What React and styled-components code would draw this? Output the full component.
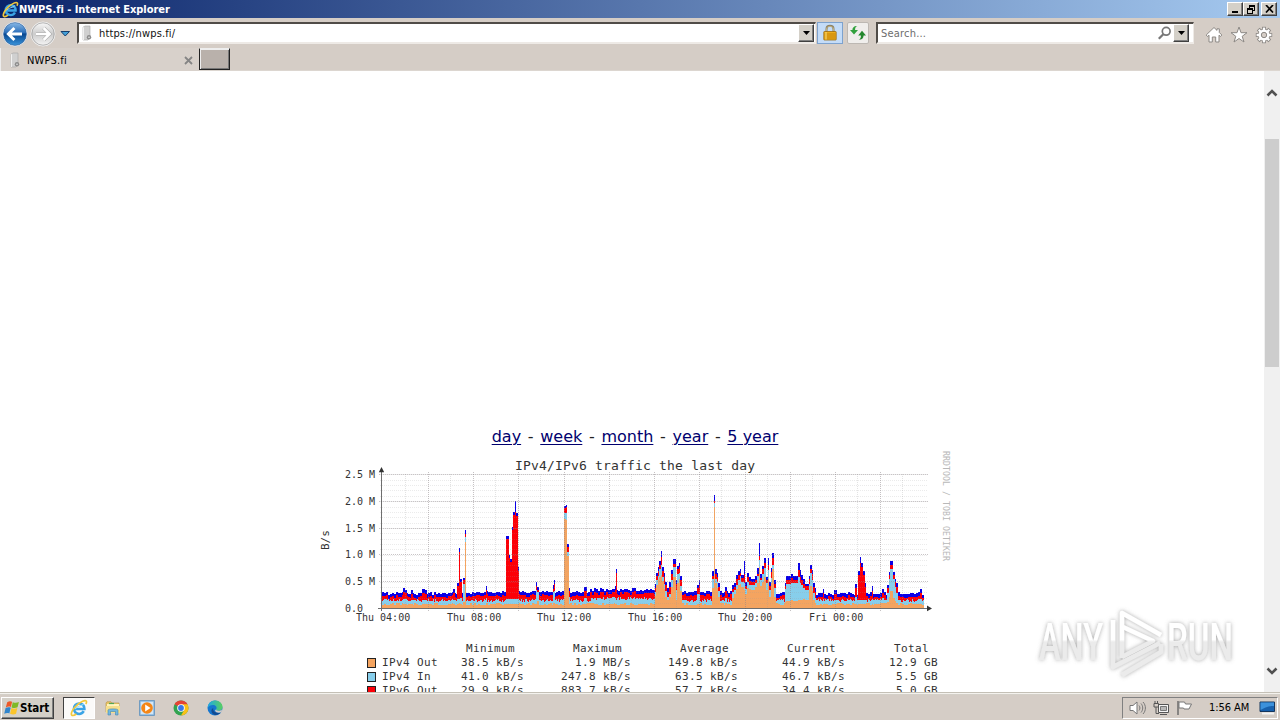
import React from "react";
import styled, { createGlobalStyle, css } from "styled-components";

const GlobalStyle = createGlobalStyle`
  * {
    box-sizing: border-box;
  }
  body {
    margin: 0;
    overflow: hidden;
    background: #fff;
    font-family: "DejaVu Sans Condensed", "DejaVu Sans", sans-serif;
    font-size: 11px;
    color: #000;
  }
  svg {
    display: block;
    flex: none;
  }
`;

const raised = css`
  border: 1px solid;
  border-color: #fff #404040 #404040 #fff;
  box-shadow: inset -1px -1px 0 #808080;
  background: #d4d0c8;
`;

const Desktop = styled.div`
  display: flex;
  flex-direction: column;
  width: 1280px;
  height: 720px;
  position: relative;
  overflow: hidden;
`;

const TitleBar = styled.div`
  display: flex;
  align-items: center;
  flex: none;
  height: 18px;
  padding: 0 3px 0 2px;
  background: linear-gradient(90deg, #0a246a, #a6caf0);
`;

const Title = styled.span`
  flex: 1;
  color: #fff;
  font-weight: bold;
  letter-spacing: -0.04px;
  white-space: nowrap;
`;

const WindowButton = styled.button`
  ${raised}
  width: 16px;
  height: 14px;
  padding: 0;
  margin-left: ${({ gap }) => gap || 0}px;
  display: flex;
  align-items: center;
  justify-content: center;
`;

const Toolbar = styled.div`
  display: flex;
  align-items: flex-start;
  flex: none;
  height: 30px;
  padding: 4px 7px 0 2px;
  background: #d5cdc6;
`;

const NavButtons = styled.div`
  display: flex;
  width: 75px;
  margin-top: -1px;
`;

const Field = styled.div`
  display: flex;
  align-items: center;
  width: ${({ width }) => width}px;
  height: 22px;
  padding: ${({ pad }) => pad};
  margin-left: ${({ gap }) => gap || 0}px;
  background: #fff;
  border: 2px solid;
  border-color: #504c48 #eeeae6 #eeeae6 #504c48;
  border-right-width: 1px;
`;

const FieldText = styled.span`
  flex: 1;
  padding: 1px 0 0 ${({ indent }) => indent || 0}px;
  color: ${({ muted }) => (muted ? "#6d6d6d" : "#111")};
  letter-spacing: ${({ spacing }) => spacing || 0}px;
`;

const DropButton = styled.button`
  ${raised}
  width: 16px;
  height: 18px;
  padding: 0;
  display: flex;
  align-items: center;
  justify-content: center;
`;

const ToolButton = styled.button`
  display: flex;
  align-items: center;
  justify-content: center;
  width: ${({ width }) => width}px;
  height: 22px;
  padding: 0;
  margin-left: ${({ gap }) => gap}px;
  border: 1px solid ${({ active }) => (active ? "#7da2ce" : "#bdb8b3")};
  border-radius: ${({ active }) => (active ? 0 : 2)}px;
  background: ${({ active }) => (active ? "#c4dcf8" : "#f0eeec")};
`;

const ToolIcons = styled.div`
  display: flex;
  gap: 7px;
  margin: 4px 0 0 auto;
`;

const TabRow = styled.div`
  display: flex;
  flex: none;
  height: 23px;
  background: #d5cdc6;
  border-bottom: 1px solid #dcd6d0;
`;

const Tab = styled.div`
  display: flex;
  align-items: center;
  width: 199px;
  height: 23px;
  padding: 1px 6px 0 8px;
  background: #d8d1cb;
  border-left: 1px solid #eee;
`;

const TabLabel = styled.span`
  flex: 1;
  padding-left: 6px;
  letter-spacing: 0.15px;
`;

const NewTab = styled.div`
  width: 31px;
  height: 22px;
  background: #b9b1ab;
  border: 1px solid #222;
  border-top-color: #eee;
  box-shadow: inset 1px 1px 0 #eee, inset -1px -1px 0 #777;
`;

const Viewport = styled.div`
  display: flex;
  flex: none;
  height: 621px;
  overflow: hidden;
`;

const Page = styled.main`
  flex: 1;
  padding: 356px 0 0 316px;
  background: #fff;
  overflow: hidden;
`;

const Periods = styled.nav`
  width: 638px;
  height: 21px;
  font: 16px/20px "DejaVu Sans", sans-serif;
  text-align: center;
  white-space: pre;
  color: #222;
`;

const Period = styled.a`
  color: #00006e;
  text-decoration: underline;
  text-underline-offset: 2px;
  text-decoration-thickness: 1px;
`;

const Dash = styled.span`
  padding: 0 1.6px;
`;

const ChartText = styled.text`
  font-family: "DejaVu Sans Mono", monospace;
  font-size: ${({ $size }) => $size}px;
  fill: ${({ $color }) => $color || "#333"};
  white-space: pre;
`;

const Legend = styled.div`
  padding: 4px 0 0 51px;
  font: 11px/14px "DejaVu Sans Mono", monospace;
  letter-spacing: 0.38px;
  color: #333;
`;

const LegendRow = styled.div`
  display: grid;
  grid-template-columns: 15px 63px 79px 107px 107px 107px 93px;
  align-items: center;
  height: 14px;
  white-space: nowrap;
`;

const Swatch = styled.span`
  width: 9px;
  height: 10px;
  margin-top: -1px;
  border: 1px solid #222;
  background: ${({ color }) => color};
`;

const Amount = styled.span`
  text-align: right;
  padding-right: ${({ inset }) => inset || 0}px;
`;

const ScrollBar = styled.div`
  display: flex;
  flex-direction: column;
  align-items: center;
  width: 16px;
  padding: 18px 0 17px;
  background: #f0f0f0;
`;

const Thumb = styled.div`
  width: 14px;
  height: 228px;
  margin: 42px 0 auto;
  background: #cdcdcd;
`;

const Taskbar = styled.footer`
  display: flex;
  align-items: center;
  flex: none;
  height: 28px;
  padding: 2px 2px 0 1px;
  background: #d5cdc6;
  border-top: 1px solid #c4c0b6;
  box-shadow: inset 0 1px 0 #f4f2ee, inset 0 2px 0 #d4d0c8;
`;

const StartButton = styled.button`
  ${raised}
  display: flex;
  align-items: center;
  width: 53px;
  height: 22px;
  margin-right: 9px;
  padding: 0 0 0 2px;
  font: bold 11.5px "DejaVu Sans Condensed", "DejaVu Sans", sans-serif;
  letter-spacing: -0.05px;
  color: #000;
`;

const TaskItem = styled.div`
  display: flex;
  align-items: center;
  justify-content: center;
  width: 32px;
  height: 22px;
  margin-right: 2px;
  ${({ active }) =>
    active &&
    `
    background: #fbfaf9;
    border: 1px solid;
    border-color: #404040 #fff #fff #404040;
  `}
`;

const Tray = styled.div`
  display: flex;
  align-items: center;
  width: 156px;
  height: 22px;
  margin-left: auto;
  padding: 0 0 0 6px;
  border: 1px solid;
  border-color: #808080 #fff #fff #808080;
`;

const Clock = styled.span`
  width: 50px;
  margin-left: 16px;
  letter-spacing: -0.05px;
  white-space: nowrap;
`;

const TrayGap = styled.span`
  width: 6px;
`;

const Watermark = styled.div`
  position: absolute;
  left: 1030px;
  top: 602px;
`;

const IeIcon = ({ size = 16 }) => (
  <svg width={size} height={size} viewBox="0 0 16 16" fill="none">
    <path d="M12.2 10.8C11.2 12.6 9.8 13.3 8.2 13.3C5.4 13.3 3.5 11.3 3.5 8.7C3.5 6 5.5 4 8.2 4C11 4 12.9 5.9 12.8 8.9H4.2" stroke="#3ba4e6" strokeWidth="2.3" />
    <path d="M12 4.2C12.4 6 7 5.5 4.4 8.8" stroke="#9be0fb" strokeWidth=".9" />
    <path d="M14 4.5C15.4 2.2 14.6.5 11.2 2C6.5 4 1.4 10 1.2 13.2C1.1 15.5 3.5 14.8 5.7 13.3" stroke="#f2c83c" strokeWidth="1.5" />
  </svg>
);

const Favicon = () => (
  <svg width="12" height="16" viewBox="0 0 12 16">
    <path d="M2 2.2L4 1H9V13L7 15H2Z" fill="#d0d0d0" stroke="#a5a5a5" strokeWidth=".6" />
    <path d="M2.4 2.2V15" stroke="#f7f7f7" fill="none" />
    <circle cx="8" cy="12.3" r="2.2" fill="#8b8b8b" />
    <circle cx="8" cy="12.3" r=".8" fill="#e7e7e7" />
  </svg>
);

const NavIcons = () => (
  <svg width="75" height="26" viewBox="0 0 75 26">
    <defs>
      <linearGradient id="back" x2="0" y2="1">
        <stop stopColor="#8dbdea" />
        <stop offset=".45" stopColor="#2b6eb9" />
        <stop offset=".5" stopColor="#07468f" />
        <stop offset="1" stopColor="#3c99e0" />
      </linearGradient>
      <linearGradient id="forward" x2="0" y2="1">
        <stop stopColor="#fafafa" />
        <stop offset=".5" stopColor="#ccc" />
        <stop offset="1" stopColor="#f7f7f7" />
      </linearGradient>
    </defs>
    <circle cx="13" cy="13" r="12" fill="url(#back)" stroke="#e9edf3" />
    <circle cx="13" cy="13" r="11.4" fill="none" stroke="#315f98" strokeWidth=".6" />
    <path d="M20 13H7M12.4 7L6.4 13L12.4 19" fill="none" stroke="#fff" strokeWidth="3" />
    <circle cx="41" cy="13" r="12" fill="url(#forward)" stroke="#eee" />
    <circle cx="41" cy="13" r="11.2" fill="none" stroke="#999" strokeWidth=".7" />
    <path d="M34 13H47M41.6 7L47.6 13L41.6 19" fill="none" stroke="#a9a9a9" strokeWidth="3.8" />
    <path d="M34 13H47M41.6 7L47.6 13L41.6 19" fill="none" stroke="#fff" strokeWidth="2.6" />
    <path d="M59 10.5H67.5L63.25 15Z" fill="#43a0d8" stroke="#173f6d" />
  </svg>
);

const Caret = () => (
  <svg width="7" height="4" viewBox="0 0 7 4">
    <path d="M0 0H7L3.5 4Z" />
  </svg>
);

const LockIcon = () => (
  <svg width="14" height="18" viewBox="0 0 14 18">
    <path d="M3.5 8V5C3.5.8 10.5.8 10.5 5V8" fill="none" stroke="#8b8066" strokeWidth="2" />
    <path d="M3.5 7V5C3.5 1.4 10.5 1.4 10.5 5V7" fill="none" stroke="#d7c58d" strokeWidth=".7" />
    <rect x=".8" y="7.5" width="12.4" height="8.5" rx=".6" fill="#edae1c" stroke="#9a6a12" strokeWidth=".8" />
    <path d="M1.5 10H12.5M1.5 12H12.5M1.5 14H12.5" stroke="#c48109" />
    <path d="M3 8V15.5" stroke="#ffe27a" />
  </svg>
);

const RefreshIcon = () => (
  <svg width="16" height="14" viewBox="0 0 16 14">
    <path d="M7.4 0C5.3.6 5 2.6 5.1 4H8L4 8.6L0 4H2.4C2.4 1.2 4.6-.2 7.4 0Z" fill="#31a13d" />
    <path d="M8.6 13.6C10.7 13 11 11 10.9 9.4H8.2L12 4.8L16 9.4H13.6C13.6 12.4 11.4 13.8 8.6 13.6Z" fill="#23872e" />
  </svg>
);

const SearchIcon = () => (
  <svg width="15" height="14" viewBox="0 0 15 14">
    <circle cx="8.2" cy="5.3" r="3.9" fill="#fff" stroke="#777" strokeWidth="1.7" />
    <path d="M5.3 8.3L.8 12.8" stroke="#777" strokeWidth="2.2" />
  </svg>
);

const HomeIcon = () => (
  <svg width="18" height="18" viewBox="0 0 18 18" fill="#fff" stroke="#8d8985">
    <path d="M9 1.5L1.2 9L2.5 10.5L4 9.2V16H7.3V11H10.7V16H14V9.2L15.5 10.5L16.8 9L14.3 6.5V2.8H12V4.4Z" />
  </svg>
);

const StarIcon = () => (
  <svg width="18" height="18" viewBox="0 0 18 18" fill="#fff" stroke="#8d8985">
    <path d="M9 1L11 6.7H17L12.2 10.3L14 16L9 12.5L4 16L5.8 10.3L1 6.7H7Z" />
  </svg>
);

const GearIcon = () => (
  <svg width="18" height="18" viewBox="0 0 18 18" fill="none">
    {[0, 45, 90, 135].map((angle) => (
      <path key={angle} d="M9 .8V17.2" stroke="#8d8985" strokeWidth="4" transform={`rotate(${angle} 9 9)`} />
    ))}
    <circle cx="9" cy="9" r="6.2" fill="#8d8985" />
    {[0, 45, 90, 135].map((angle) => (
      <path key={angle} d="M9 1.6V16.4" stroke="#fff" strokeWidth="2.3" transform={`rotate(${angle} 9 9)`} />
    ))}
    <circle cx="9" cy="9" r="5.5" fill="#fff" />
    <circle cx="9" cy="9" r="2.7" fill="#d5cdc6" stroke="#8d8985" />
  </svg>
);

const Chevron = ({ down }) => (
  <svg width="12" height="8" viewBox="0 0 12 8" fill="none">
    <path d={down ? "M1.5 1.5L6 6L10.5 1.5" : "M1.5 6.5L6 2L10.5 6.5"} stroke="#505050" strokeWidth="2.6" />
  </svg>
);

const WindowsFlag = () => (
  <svg width="16" height="16" viewBox="0 0 15 15">
    <path d="M3 2C5 .7 6.4 1 7.6 1.6L6.5 6.6C5 6 3.5 6 1.7 7Z" fill="#ed5928" />
    <path d="M8.2 2C10.4 2.8 12 2.7 14 1.8L12.7 6.8C11 7.7 9 7.8 7.1 7Z" fill="#7fb927" />
    <path d="M1.5 7.6C3.2 6.6 5 6.6 6.3 7.2L5 12.6C3.6 12 2 12 .2 13Z" fill="#3185cc" />
    <path d="M7 7.6C8.8 8.4 10.7 8.4 12.5 7.5L11.3 12.9C9.4 13.8 7.8 13.7 5.7 13Z" fill="#fbc52b" />
  </svg>
);

const FolderIcon = () => (
  <svg width="16" height="16" viewBox="0 0 16 16">
    <path d="M1 3L2 1.8H6L7 3H14V12H1Z" fill="#e8c568" stroke="#b79140" strokeWidth=".6" />
    <path d="M2 4H14V7H2Z" fill="#fff4bc" />
    <path d="M4 3.5H9" stroke="#51a655" strokeWidth="1.2" />
    <path d="M1 6H15V13H1Z" fill="#f6df8c" />
    <path d="M3 15V10C3 8.5 13 8.5 13 10V15H10.5V11.5H5.5V15Z" fill="#72b8df" stroke="#4386af" strokeWidth=".6" />
  </svg>
);

const PlayerIcon = () => (
  <svg width="16" height="16" viewBox="0 0 16 16">
    <rect x=".7" y=".7" width="14.6" height="14.6" fill="#aad0ef" stroke="#5c8fbd" />
    <rect x="2" y="2" width="12" height="12" fill="#d3e6f6" />
    <circle cx="8" cy="8" r="5.8" fill="#f48616" />
    <path d="M6.2 4.5L11.5 8L6.2 11.5Z" fill="#fff" />
  </svg>
);

const ChromeIcon = () => (
  <svg width="16" height="16" viewBox="0 0 16 16">
    <circle cx="8" cy="8" r="7.5" fill="#32a350" />
    <path d="M8 8L1.5 4.2A7.5 7.5 0 0 1 14.5 4.2Z" fill="#e54335" />
    <path d="M8 4.3H14.5A7.5 7.5 0 0 1 8 15.5L11.2 10Z" fill="#fbc116" />
    <circle cx="8" cy="8" r="3.8" fill="#fff" />
    <circle cx="8" cy="8" r="2.9" fill="#3978e7" />
  </svg>
);

const EdgeIcon = () => (
  <svg width="16" height="16" viewBox="0 0 16 16">
    <defs>
      <linearGradient id="edge">
        <stop stopColor="#20a8e5" />
        <stop offset="1" stopColor="#58cf60" />
      </linearGradient>
    </defs>
    <circle cx="8" cy="8" r="7.5" fill="#1676cf" />
    <path d="M.6 8C1 3.4 4 .5 8 .5C12.6.5 15.5 3.6 15.5 7C15.5 9.4 13.7 10.7 11.5 10.7C9.3 10.7 8.6 9.7 9.4 8.7C10.2 7.2 8.6 5 6 5C3.5 5 1.5 6 .6 8Z" fill="url(#edge)" />
    <path d="M6.2 8C5.6 11.5 9 13.5 13.8 12.6C10.5 16.4 4.4 15.5 4.4 10.8C4.4 9.5 5.2 8.6 6.2 8Z" fill="#134b91" />
    <path d="M9.4 8.7C8.6 9.7 9.3 10.7 11.5 10.7C12.9 10.7 14.1 10.2 14.8 9.4V12C12 13.4 8.8 12.6 8 10.8Z" fill="#d5cdc6" />
  </svg>
);

const SpeakerIcon = () => (
  <svg width="18" height="16" viewBox="0 0 18 16" fill="none" stroke="#777">
    <path d="M1 5.5H4L8 2V14L4 10.5H1Z" fill="#fff" />
    <path d="M10 5.5C11.2 7 11.2 9 10 10.5M12 3.5C14.3 6.3 14.3 9.7 12 12.5M14 2C17.2 5.4 17.2 10.6 14 14" />
  </svg>
);

const NetworkIcon = () => (
  <svg width="17" height="16" viewBox="0 0 17 16" fill="none" stroke="#555">
    <path d="M5.5 4.5H15.5V12.5H5.5Z" fill="#f4f4f4" />
    <path d="M7.5 6.5H13.5V10.5H7.5Z" fill="#b8b8b8" stroke="#777" />
    <path d="M7 14.5H14M1 3.5H5.5V7H1ZM2 1V3M4.5 1V3M3 7V13.5H6" />
  </svg>
);

const FlagIcon = () => (
  <svg width="17" height="16" viewBox="0 0 17 16">
    <path d="M2 1V15" stroke="#666" strokeWidth="1.4" />
    <path d="M3 2H8.5L9.5 4H15.5L13 9H8L7.5 8H3Z" fill="#fff" stroke="#777" />
  </svg>
);

const DesktopIcon = () => (
  <svg width="16" height="16" viewBox="0 0 16 16">
    <path d="M1 2H15.5V11.5H1Z" fill="#1760ad" stroke="#16365d" />
    <path d="M1.5 2.5H15V6C9 5.5 5 8 1.5 10Z" fill="#3c91dc" />
    <path d="M3 13.5H15" stroke="#f4f4f4" strokeWidth="2" />
  </svg>
);

// Each burst: first x, last x, then the top of IPv6 In, IPv6 Out, IPv4 In and IPv4 Out
const bursts = [
  [403, 404, 588, 592, 599, 604], [405, 406, 590, 593, 599, 604], [411, 412, 590, 594, 600, 604],
  [422, 424, 589, 593, 600, 604], [425, 426, 590, 594, 600, 604], [453, 454, 589, 593, 600, 604],
  [457, 458, 583, 586, 599, 604], [459, 459, 548, 552, 599, 603], [460, 461, 579, 582, 598, 604],
  [463, 464, 578, 580, 584, 602], [465, 465, 530, 534, 537, 542], [486, 486, 586, 590, 598, 603],
  [506, 508, 536, 539, 599, 604], [509, 509, 555, 558, 599, 604], [510, 511, 559, 562, 599, 604],
  [512, 512, 527, 530, 599, 604], [513, 514, 512, 515, 599, 604], [515, 515, 501, 512, 599, 604],
  [516, 517, 513, 516, 599, 604], [518, 518, 567, 571, 599, 604], [536, 536, 582, 586, 590, 604],
  [537, 538, 587, 590, 592, 601], [553, 553, 585, 589, 592, 603], [554, 554, 580, 584, 591, 603],
  [564, 565, 506, 508, 513, 519], [566, 566, 505, 507, 513, 520], [567, 568, 544, 547, 552, 556],
  [569, 569, 588, 591, 597, 604], [584, 586, 587, 591, 598, 604], [615, 615, 586, 590, 598, 604],
  [616, 616, 569, 573, 600, 604], [655, 655, 584, 588, 592, 596], [656, 657, 573, 576, 580, 585],
  [658, 658, 567, 571, 576, 580], [659, 660, 561, 565, 569, 577], [661, 661, 551, 557, 565, 575],
  [662, 663, 567, 571, 577, 581], [664, 664, 573, 577, 584, 589], [665, 666, 582, 585, 591, 597],
  [667, 668, 588, 592, 597, 600], [669, 670, 582, 587, 594, 597], [671, 672, 570, 574, 580, 587],
  [673, 675, 559, 564, 567, 577], [676, 676, 580, 584, 590, 600], [677, 678, 566, 569, 574, 583],
  [679, 679, 563, 567, 573, 579], [680, 681, 576, 580, 586, 591], [697, 698, 585, 588, 594, 604],
  [699, 699, 580, 585, 594, 604], [712, 713, 571, 576, 579, 588], [714, 714, 495, 501, 503, 507],
  [715, 716, 569, 574, 579, 583], [717, 717, 573, 577, 582, 588], [718, 719, 583, 587, 591, 597],
  [725, 726, 587, 591, 598, 603], [732, 733, 585, 589, 592, 598], [734, 735, 583, 587, 590, 594],
  [736, 737, 575, 579, 585, 589], [738, 739, 571, 575, 580, 585], [740, 740, 569, 573, 576, 584],
  [741, 743, 575, 578, 582, 587], [744, 744, 561, 574, 583, 590], [745, 746, 582, 586, 589, 594],
  [747, 748, 573, 577, 582, 588], [749, 750, 577, 581, 585, 589], [751, 754, 579, 582, 585, 590],
  [755, 756, 576, 580, 583, 587], [757, 758, 568, 574, 576, 583], [759, 759, 543, 556, 560, 567],
  [760, 761, 574, 578, 580, 586], [762, 763, 566, 569, 574, 582], [764, 765, 558, 563, 568, 577],
  [766, 767, 577, 580, 583, 590], [768, 768, 558, 565, 570, 579], [769, 770, 582, 586, 590, 597],
  [771, 771, 568, 572, 578, 583], [772, 773, 553, 558, 565, 569], [774, 775, 580, 584, 588, 597],
  [785, 785, 583, 586, 589, 602], [786, 790, 576, 580, 584, 601], [791, 792, 574, 578, 583, 600],
  [793, 797, 576, 580, 583, 601], [798, 799, 563, 570, 577, 600], [800, 800, 570, 577, 583, 600],
  [801, 802, 575, 580, 585, 600], [803, 804, 579, 584, 588, 599], [805, 808, 584, 586, 590, 600],
  [809, 809, 576, 579, 584, 590], [810, 811, 565, 569, 573, 586], [812, 812, 570, 574, 580, 591],
  [813, 814, 583, 587, 593, 600], [815, 815, 588, 592, 598, 603], [823, 823, 589, 593, 599, 604],
  [834, 836, 590, 594, 600, 604], [855, 856, 584, 588, 597, 604], [858, 859, 571, 575, 600, 604],
  [860, 860, 557, 563, 600, 604], [861, 862, 563, 567, 600, 604], [863, 864, 571, 575, 600, 604],
  [865, 865, 583, 587, 600, 604], [872, 872, 586, 591, 599, 604], [882, 883, 589, 593, 598, 603],
  [887, 888, 585, 588, 593, 602], [889, 889, 572, 575, 579, 597], [890, 892, 561, 565, 569, 591],
  [893, 894, 572, 575, 579, 598], [895, 895, 579, 582, 587, 601], [896, 897, 583, 587, 593, 603],
  [920, 921, 589, 593, 599, 604],
];

const noise = (n) => {
  const s = Math.sin(n * 12.9898) * 43758.5453;
  return s - Math.floor(s);
};

const idleAt = (x) => {
  let level = 593.2;
  if (x > 475 && x < 590) level = 592;
  if (x >= 590 && x < 655) level = 589.5;
  if (x >= 682 && x < 732) level = 591.8;
  if (x >= 815) level = 593.5;
  const step = Math.floor(x / 2);
  const top = Math.round(level + noise(step) * 3 - 1.5);
  const blue = 3 + Math.round(noise(step + 41));
  const cyan = (x > 590 && x < 655 ? 598.3 : 600.3) + noise(x + 7) * 3 - 1.5;
  return [top, top + blue, Math.round(cyan), Math.round(604 + noise(step + 99) * 3 - 1.5)];
};

const columns = [];
for (let x = 382; x < 924; x++) {
  const burst = bursts.find(([from, to]) => x >= from && x <= to);
  columns.push([x, ...(burst ? burst.slice(2) : idleAt(x))]);
}

const series = [
  { color: "#0a00e6", at: 1 },
  { color: "#fc0008", at: 2 },
  { color: "#87ceeb", at: 3 },
  { color: "#f4a460", at: 4 },
];

const areaPath = (at) => columns.map((c) => `M${c[0]} 608V${c[at]}h1V608z`).join("");

const yTicks = ["0.0  ", "0.5 M", "1.0 M", "1.5 M", "2.0 M", "2.5 M"];
const xTicks = ["Thu 04:00", "Thu 08:00", "Thu 12:00", "Thu 16:00", "Thu 20:00", "Fri 00:00"];
const yAt = [608.5, 581.5, 554.5, 528.5, 501.5, 474.5];
const range = (n) => Array.from({ length: n }, (_, i) => i);

const TrafficChart = () => (
  <svg width="638" height="190" viewBox="316 448 638 190">
    <g shapeRendering="crispEdges">
      {series.map(({ color, at }) => (
        <path key={color} d={areaPath(at)} fill={color} />
      ))}
      <g strokeDasharray="1 1" fill="none">
        {range(25).map((i) => (
          <path key={i} d={`M380 ${Math.round(603 - i * 5.36) + 0.5}H927`} stroke="#999" strokeOpacity=".2" />
        ))}
        {range(12).map((i) => (
          <path key={i} d={`M${Math.floor(405 + i * 45.25) + 0.5} 474V609`} stroke="#999" strokeOpacity=".28" />
        ))}
        {yAt.slice(1).map((y) => (
          <path key={y} d={`M379 ${y}H928`} stroke="#8c8488" strokeOpacity=".48" />
        ))}
        {range(11).map((i) => (
          <path key={i} d={`M${Math.floor(428.3 + i * 45.25) + 0.5} 472V611`} stroke="#8c8488" strokeOpacity=".5" />
        ))}
      </g>
      <path d="M381.5 611V471M378 608.5H929" stroke="#555" strokeOpacity=".85" fill="none" />
    </g>
    <path d="M378.8 472.2H384.2L381.5 467ZM927 605.5V611.2L932 608.4Z" fill="#333" />
    <ChartText $size={13} x="515" y="470" textLength="240">IPv4/IPv6 traffic the last day</ChartText>
    {yTicks.map((label, i) => (
      <ChartText key={label} $size={10} x="345" y={yAt[i] + 3.5}>{label}</ChartText>
    ))}
    {xTicks.map((label, i) => (
      <ChartText key={label} $size={10} x={Math.round(356 + i * 90.6)} y="621">{label}</ChartText>
    ))}
    <ChartText $size={11} transform="translate(329 550) rotate(-90)">B/s</ChartText>
    <ChartText $size={8.2} $color="#b8b8b8" transform="translate(943 451) rotate(90)" textLength="110">
      RRDTOOL / TOBI OETIKER
    </ChartText>
  </svg>
);

const traffic = [
  { name: "IPv4 Out", color: "#f4a460", values: ["38.5 kB/s", "1.9 MB/s", "149.8 kB/s", "44.9 kB/s", "12.9 GB"] },
  { name: "IPv4 In", color: "#87ceeb", values: ["41.0 kB/s", "247.8 kB/s", "63.5 kB/s", "46.7 kB/s", "5.5 GB"] },
  { name: "IPv6 Out", color: "#fc0008", values: ["29.9 kB/s", "883.7 kB/s", "57.7 kB/s", "34.4 kB/s", "5.0 GB"] },
];

const periods = ["day", "week", "month", "year", "5 year"];

const App = () => (
  <Desktop>
    <GlobalStyle />
    <TitleBar>
      <IeIcon size={17} />
      <Title>NWPS.fi - Internet Explorer</Title>
      <WindowButton>
        <svg width="10" height="9"><path d="M2 7H8" stroke="#000" strokeWidth="2" /></svg>
      </WindowButton>
      <WindowButton>
        <svg width="10" height="9" fill="none" stroke="#000" shapeRendering="crispEdges">
          <path d="M3.5 4V.5H8.5V5.5H7M3 1.5H9M1.5 3.5H6.5V8.5H1.5ZM1 4.5H7" />
        </svg>
      </WindowButton>
      <WindowButton gap={2}>
        <svg width="9" height="8"><path d="M1 0L8 7.5M8 0L1 7.5" stroke="#000" strokeWidth="1.7" /></svg>
      </WindowButton>
    </TitleBar>

    <Toolbar>
      <NavButtons><NavIcons /></NavButtons>
      <Field width={739} pad="0 1px 0 2px">
        <Favicon />
        <FieldText indent={6} spacing={0.14}>https://nwps.fi/</FieldText>
        <DropButton><Caret /></DropButton>
      </Field>
      <ToolButton active width={26} gap={1}><LockIcon /></ToolButton>
      <ToolButton width={22} gap={4}><RefreshIcon /></ToolButton>
      <Field width={318} gap={7} pad="0 4px 0 3px">
        <FieldText muted spacing={0.2}>Search...</FieldText>
        <SearchIcon />
        <DropButton><Caret /></DropButton>
      </Field>
      <ToolIcons>
        <HomeIcon />
        <StarIcon />
        <GearIcon />
      </ToolIcons>
    </Toolbar>

    <TabRow>
      <Tab>
        <Favicon />
        <TabLabel>NWPS.fi</TabLabel>
        <svg width="9" height="9"><path d="M1 1L8 8M8 1L1 8" stroke="#858585" strokeWidth="1.8" /></svg>
      </Tab>
      <NewTab />
    </TabRow>

    <Viewport>
      <Page>
        <Periods>
          {periods.map((period, i) => (
            <React.Fragment key={period}>
              {i > 0 && <Dash> - </Dash>}
              <Period>{period}</Period>
            </React.Fragment>
          ))}
        </Periods>
        <TrafficChart />
        <Legend>
          <LegendRow>
            <span />
            <span />
            <Amount inset={9}>Minimum</Amount>
            <Amount inset={9}>Maximum</Amount>
            <Amount inset={9}>Average</Amount>
            <Amount inset={9}>Current</Amount>
            <Amount inset={9}>Total</Amount>
          </LegendRow>
          {traffic.map(({ name, color, values }) => (
            <LegendRow key={name}>
              <Swatch color={color} />
              <span>{name}</span>
              {values.map((value, i) => (
                <Amount key={i}>{value}</Amount>
              ))}
            </LegendRow>
          ))}
        </Legend>
      </Page>
      <ScrollBar>
        <Chevron />
        <Thumb />
        <Chevron down />
      </ScrollBar>
    </Viewport>

    <Taskbar>
      <StartButton>
        <WindowsFlag />
        Start
      </StartButton>
      <TaskItem active><IeIcon size={18} /></TaskItem>
      <TaskItem><FolderIcon /></TaskItem>
      <TaskItem><PlayerIcon /></TaskItem>
      <TaskItem><ChromeIcon /></TaskItem>
      <TaskItem><EdgeIcon /></TaskItem>
      <Tray>
        <SpeakerIcon />
        <TrayGap />
        <NetworkIcon />
        <TrayGap />
        <FlagIcon />
        <Clock>1:56 AM</Clock>
        <DesktopIcon />
      </Tray>
    </Taskbar>

    <Watermark>
      <svg width="212" height="82" viewBox="0 0 212 82">
        <defs>
          <linearGradient id="fade" gradientUnits="userSpaceOnUse" x1="0" y1="10" x2="0" y2="70">
            <stop offset=".46" stopColor="#fff" />
            <stop offset=".5" stopColor="#ebebeb" />
          </linearGradient>
          <filter id="glow" x="-10%" y="-20%" width="120%" height="140%">
            <feDropShadow dx="0" dy="0" stdDeviation="2" floodColor="#777" floodOpacity=".65" />
          </filter>
        </defs>
        <g filter="url(#glow)" fontFamily="Roboto, sans-serif" fontWeight="500" fontSize="52" fill="url(#fade)">
          <text x="9" y="58" textLength="64" lengthAdjust="spacingAndGlyphs">ANY</text>
          <text x="137" y="58" textLength="66" lengthAdjust="spacingAndGlyphs">RUN</text>
          <g fill="none" stroke="url(#fade)" strokeWidth="4.5" strokeLinejoin="round">
            <path d="M92 56V11L131 33" />
            <path d="M83 18V65L130 41" />
            <path d="M93 25L123 39L92 55M92 73L131 50V42" />
          </g>
        </g>
      </svg>
    </Watermark>
  </Desktop>
);

export default App;
